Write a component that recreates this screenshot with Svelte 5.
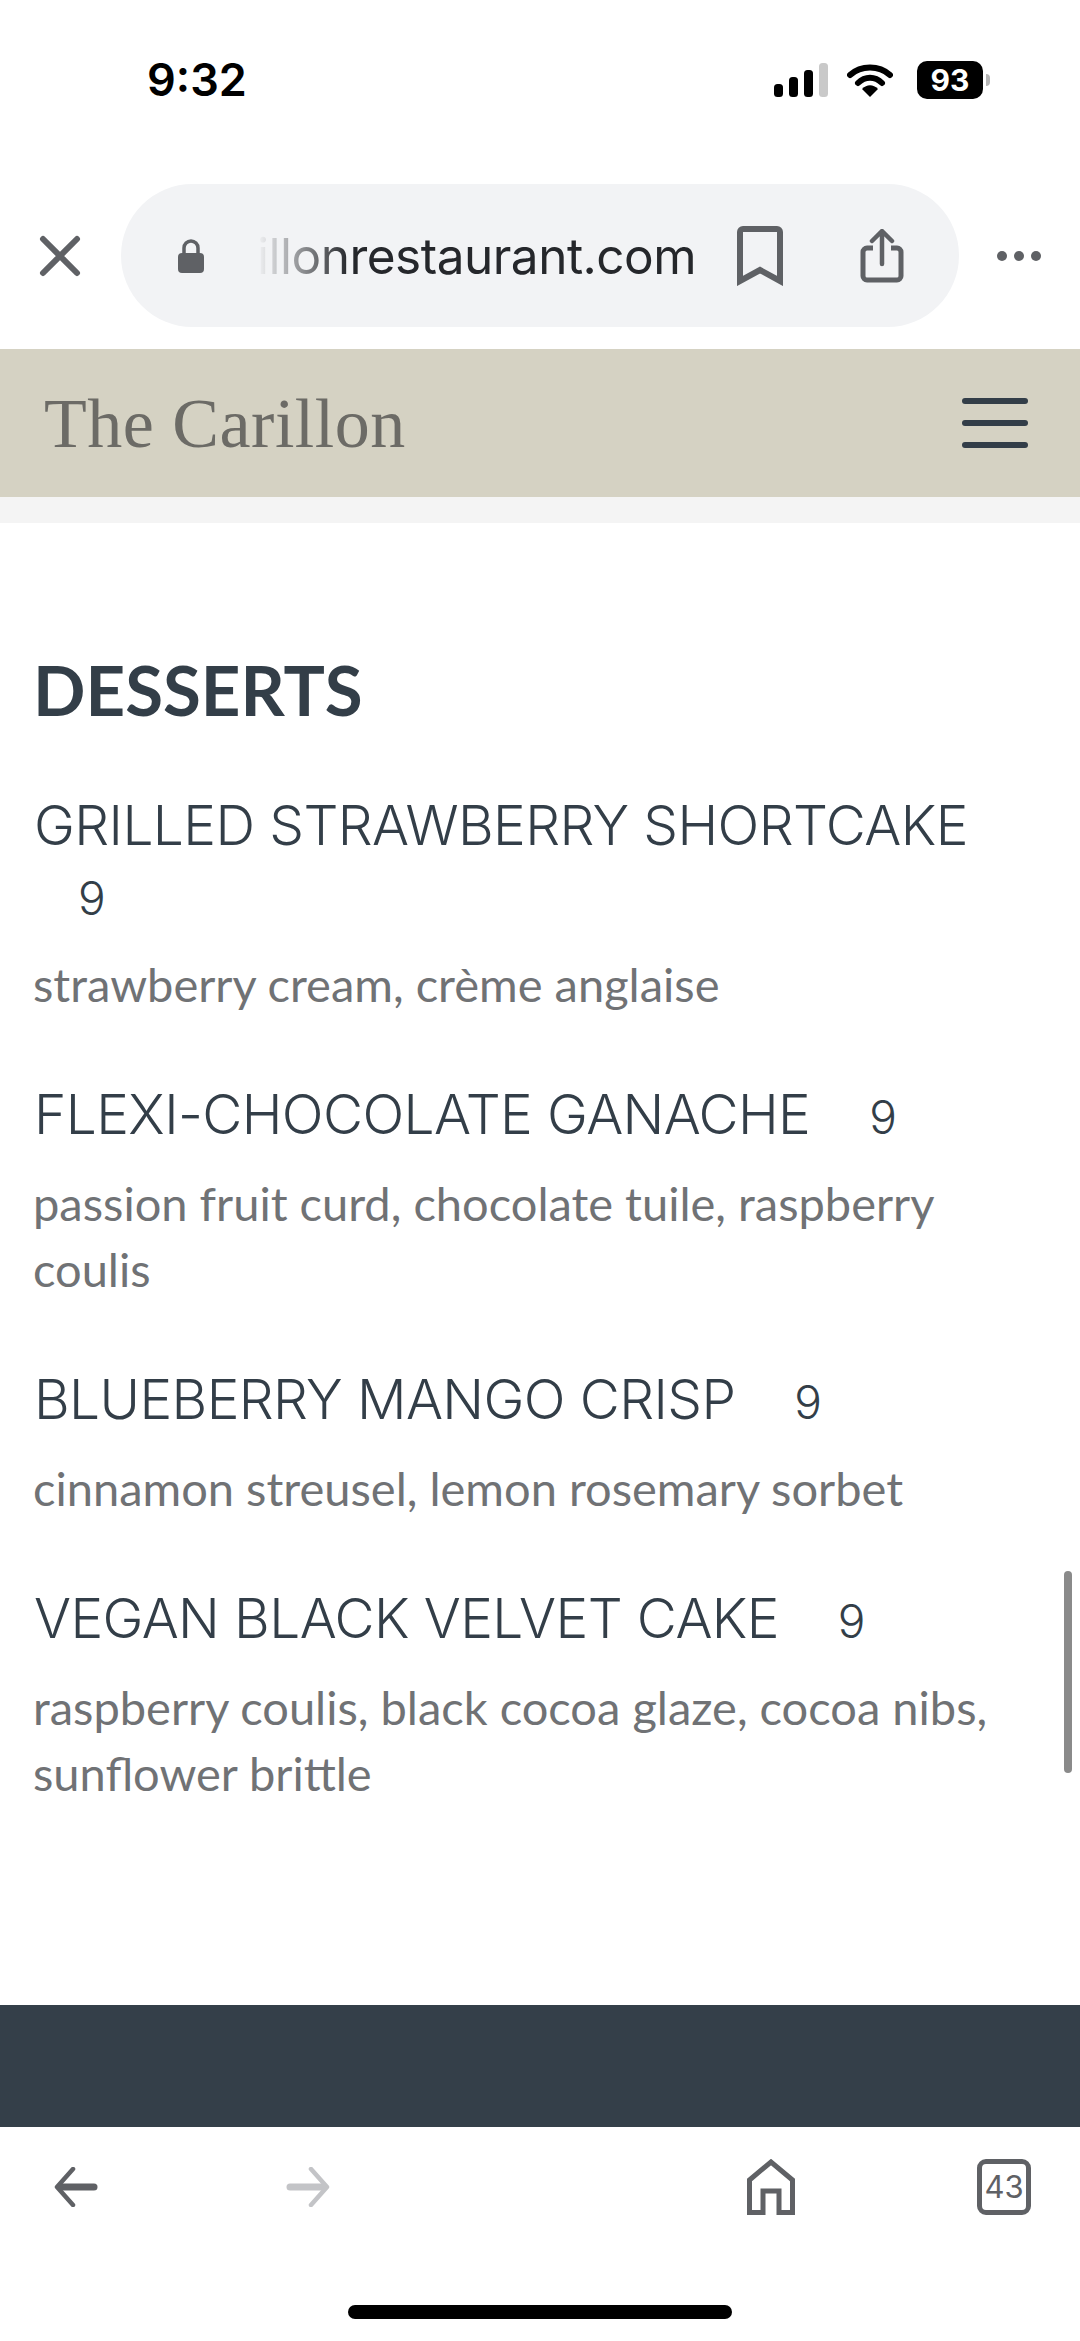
<script>
	const desserts = [
		{ name: 'GRILLED STRAWBERRY SHORTCAKE', price: '9', desc: 'strawberry cream, crème anglaise' },
		{ name: 'FLEXI-CHOCOLATE GANACHE', price: '9', desc: 'passion fruit curd, chocolate tuile, raspberry coulis' },
		{ name: 'BLUEBERRY MANGO CRISP', price: '9', desc: 'cinnamon streusel, lemon rosemary sorbet' },
		{ name: 'VEGAN BLACK VELVET CAKE', price: '9', desc: 'raspberry coulis, black cocoa glaze, cocoa nibs, sunflower brittle' }
	];
</script>

<div class="phone">
	<div class="status">
		<span class="time">9:32</span>
		<div class="status-icons">
			<svg width="54" height="34" viewBox="0 0 54 34">
				<rect x="0" y="21" width="9" height="13" rx="3.5" fill="#000" />
				<rect x="15" y="14" width="9" height="20" rx="3.5" fill="#000" />
				<rect x="30" y="7" width="9" height="27" rx="3.5" fill="#000" />
				<rect x="45" y="0" width="9" height="34" rx="3.5" fill="#c9c9c9" />
			</svg>
			<svg class="wifi" width="46" height="34" viewBox="0 0 46 34">
				<path d="M3 12 C14 2 32 2 43 12" fill="none" stroke="#000" stroke-width="6" stroke-linecap="round" />
				<path d="M11 20 C18 13 28 13 35 20" fill="none" stroke="#000" stroke-width="6" stroke-linecap="round" />
				<path d="M15 26 C20 21 26 21 31 26 L23 34 Z" fill="#000" />
			</svg>
			<div class="battery">
				<span class="level">93</span>
				<span class="nub"></span>
			</div>
		</div>
	</div>

	<div class="addressbar">
		<svg class="close" width="42" height="42" viewBox="0 0 42 42">
			<path d="M4 4 L38 38 M38 4 L4 38" stroke="#5f6165" stroke-width="6" stroke-linecap="round" />
		</svg>
		<div class="pill">
			<svg width="28" height="34" viewBox="0 0 28 34">
				<path d="M7 15 V9 a7 7 0 0 1 14 0 V15" fill="none" stroke="#5f6165" stroke-width="3.5" />
				<rect x="1" y="14" width="26" height="20" rx="4" fill="#5f6165" />
			</svg>
			<span class="url"><span class="fade">illon</span>restaurant.com</span>
			<svg class="bookmark" width="46" height="60" viewBox="0 0 46 60">
				<path d="M3 55 V6 a3 3 0 0 1 3 -3 H40 a3 3 0 0 1 3 3 V55 L23 44 Z" fill="none" stroke="#5f6165" stroke-width="6" />
			</svg>
			<svg class="share" width="44" height="54" viewBox="0 0 44 54">
				<path d="M22 35 V3 M12 12 L22 2 L32 12" fill="none" stroke="#5f6165" stroke-width="4.5" stroke-linecap="round" stroke-linejoin="round" />
				<path d="M13 19 H7 a4 4 0 0 0 -4 4 V47 a4 4 0 0 0 4 4 H37 a4 4 0 0 0 4 -4 V23 a4 4 0 0 0 -4 -4 H31" fill="none" stroke="#5f6165" stroke-width="5" />
			</svg>
		</div>
		<div class="more"><i></i><i></i><i></i></div>
	</div>

	<header class="site-header">
		<span class="logo">The Carillon</span>
		<div class="burger"><i></i><i></i><i></i></div>
	</header>
	<div class="strip"></div>

	<main class="menu">
		<h2>DESSERTS</h2>
		{#each desserts as item}
			<div class="item">
				<h3>{item.name} <span class="price">{item.price}</span></h3>
				<p>{item.desc}</p>
			</div>
		{/each}
	</main>

	<div class="footer"></div>

	<nav class="toolbar">
		<svg width="44" height="40" viewBox="0 0 44 40">
			<path d="M19 2 L3 20 L19 38" fill="none" stroke="#5f6165" stroke-linecap="round" stroke-linejoin="round" stroke-width="4.5" />
			<path d="M40 20 H6" fill="none" stroke="#5f6165" stroke-linecap="round" stroke-width="7" />
		</svg>
		<svg class="forward" width="44" height="40" viewBox="0 0 44 40">
			<path d="M25 2 L41 20 L25 38" fill="none" stroke="#c3c4c7" stroke-linecap="round" stroke-linejoin="round" stroke-width="4.5" />
			<path d="M4 20 H38" fill="none" stroke="#c3c4c7" stroke-linecap="round" stroke-width="7" />
		</svg>
		<span class="spacer"></span>
		<svg class="home" width="48" height="56" viewBox="0 0 48 56">
			<path d="M2.5 53.5 V21 L24 3 L45.5 21 V53.5 H32 V32 H16 V53.5 Z" fill="none" stroke="#5f6165" stroke-width="5" />
		</svg>
		<div class="tabs">43</div>
	</nav>

	<div class="home-indicator"><span></span></div>
	<div class="scrollbar"></div>
</div>

<style>
	:global(body) {
		margin: 0;
		background: #fff;
	}

	.phone {
		position: relative;
		width: 1080px;
		height: 2341px;
		overflow: hidden;
		background: #fff;
		font-family: "Lato", "Liberation Sans", sans-serif;
	}

	.status {
		height: 184px;
		box-sizing: border-box;
		padding: 53px 90px 0 147px;
		display: flex;
		justify-content: space-between;
		align-items: flex-start;
	}

	.time {
		font-family: "Inter", sans-serif;
		font-weight: 600;
		font-size: 45px;
		line-height: 54px;
		color: #000;
	}

	.status-icons {
		display: flex;
		align-items: center;
		gap: 19px;
		height: 54px;
	}

	.wifi {
		margin-right: 5px;
	}

	.battery {
		display: flex;
		align-items: center;
		gap: 3px;
	}

	.level {
		width: 66px;
		height: 38px;
		border-radius: 10px;
		background: #000;
		color: #fff;
		font-family: "Inter", sans-serif;
		font-weight: 700;
		font-size: 30px;
		line-height: 38px;
		text-align: center;
	}

	.nub {
		width: 4px;
		height: 12px;
		background: #b5b5b5;
		border-radius: 0 4px 4px 0;
	}

	.addressbar {
		height: 143px;
		display: flex;
		align-items: center;
		margin-bottom: 22px;
	}

	.close {
		margin: 0 40px 0 39px;
		flex: none;
	}

	.pill {
		width: 838px;
		height: 143px;
		flex: none;
		box-sizing: border-box;
		padding-left: 56px;
		border-radius: 72px;
		background: #f2f3f5;
		display: flex;
		align-items: center;
	}

	.url {
		font-family: "Inter", sans-serif;
		font-size: 49.5px;
		color: #25272b;
		margin-left: 52px;
		width: 446px;
		flex: none;
		white-space: nowrap;
		letter-spacing: -0.5px;
	}

	.fade {
		background: linear-gradient(90deg, #f2f3f5, #25272b);
		-webkit-background-clip: text;
		background-clip: text;
		color: transparent;
	}

	.bookmark {
		margin-left: 34px;
	}

	.share {
		margin-left: 77px;
	}

	.more {
		display: flex;
		gap: 7px;
		margin-left: 38px;
	}

	.more i {
		width: 10px;
		height: 10px;
		border-radius: 50%;
		background: #5f6165;
	}

	.site-header {
		height: 148px;
		box-sizing: border-box;
		background: #d5d2c3;
		display: flex;
		align-items: center;
		justify-content: space-between;
		padding: 0 52px 0 44px;
	}

	.logo {
		font-family: "Liberation Serif", serif;
		font-size: 70px;
		letter-spacing: 0.5px;
		color: #6c6b66;
		margin-top: 2px;
	}

	.burger {
		display: flex;
		flex-direction: column;
		gap: 16px;
	}

	.burger i {
		display: block;
		width: 66px;
		height: 6px;
		border-radius: 3px;
		background: #333e48;
	}

	.strip {
		height: 26px;
		background: #f4f4f4;
	}

	.menu {
		height: 1482px;
		box-sizing: border-box;
		padding: 127px 34px 0;
		color: #333e48;
	}

	h2 {
		margin: 0 0 60px -1px;
		font-size: 69px;
		line-height: 80px;
		font-weight: 700;
	}

	.item {
		margin-bottom: 62px;
	}

	h3 {
		margin: 0 30px 0 0;
		font-family: "Inter", sans-serif;
		font-size: 55px;
		line-height: 70px;
		font-weight: 300;
		letter-spacing: -0.6px;
	}

	.price {
		display: inline-block;
		margin-left: 44px;
		font-size: 46px;
		letter-spacing: 0;
	}

	p {
		margin: 18px 0 0 -1px;
		font-size: 47px;
		line-height: 66px;
		color: #707275;
	}

	.footer {
		height: 122px;
		background: #343f49;
	}

	.toolbar {
		height: 120px;
		box-sizing: border-box;
		padding: 0 49px 0 54px;
		display: flex;
		align-items: center;
	}

	.forward {
		margin-left: 188px;
	}

	.spacer {
		flex: 1;
	}

	.tabs {
		margin-left: 182px;
		width: 44px;
		height: 46px;
		border: 5px solid #5f6165;
		border-radius: 9px;
		color: #5f6165;
		font-family: "Inter", sans-serif;
		font-size: 31px;
		line-height: 46px;
		text-align: center;
	}

	.home-indicator {
		display: flex;
		justify-content: center;
		padding-top: 58px;
	}

	.home-indicator span {
		width: 384px;
		height: 14px;
		border-radius: 7px;
		background: #000;
	}

	.scrollbar {
		position: absolute;
		left: 1064px;
		top: 1571px;
		width: 8px;
		height: 202px;
		border-radius: 4px;
		background: #8a8a8a;
	}
</style>
